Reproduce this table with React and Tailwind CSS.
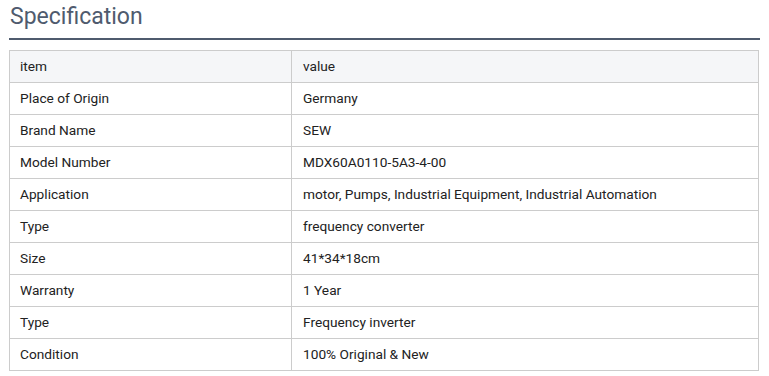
import React from "react";

const rows = [
  ["Place of Origin", "Germany"],
  ["Brand Name", "SEW"],
  ["Model Number", "MDX60A0110-5A3-4-00"],
  ["Application", "motor, Pumps, Industrial Equipment, Industrial Automation"],
  ["Type", "frequency converter"],
  ["Size", "41*34*18cm"],
  ["Warranty", "1 Year"],
  ["Type", "Frequency inverter"],
  ["Condition", "100% Original & New"],
];

export default function App() {
  return (
    <div className="bg-white w-[769px] h-[376px] px-[9px] pt-[2px]" style={{ fontFamily: "Roboto, 'Liberation Sans', sans-serif" }}>
      <h2 className="text-[23px] leading-[30px] text-[#4f5b6e] font-normal pl-[1px] h-[38px] border-b-2 border-[#4f5b6e]">Specification</h2>
      <table className="mt-[10px] w-[750px] border-collapse text-[13.7px] text-[#222222]">
        <colgroup>
          <col className="w-[282px]" />
          <col />
        </colgroup>
        <tbody>
          <tr className="bg-[#f5f6f8]">
            <td className="border border-[#cccccc] h-[32px] px-[10px] py-0">item</td>
            <td className="border border-[#cccccc] h-[32px] px-[11px] py-0">value</td>
          </tr>
          {rows.map(([k, v], i) => (
            <tr key={i}>
              <td className="border border-[#cccccc] h-[32px] px-[10px] py-0">{k}</td>
              <td className="border border-[#cccccc] h-[32px] px-[11px] py-0">{v}</td>
            </tr>
          ))}
        </tbody>
      </table>
    </div>
  );
}
